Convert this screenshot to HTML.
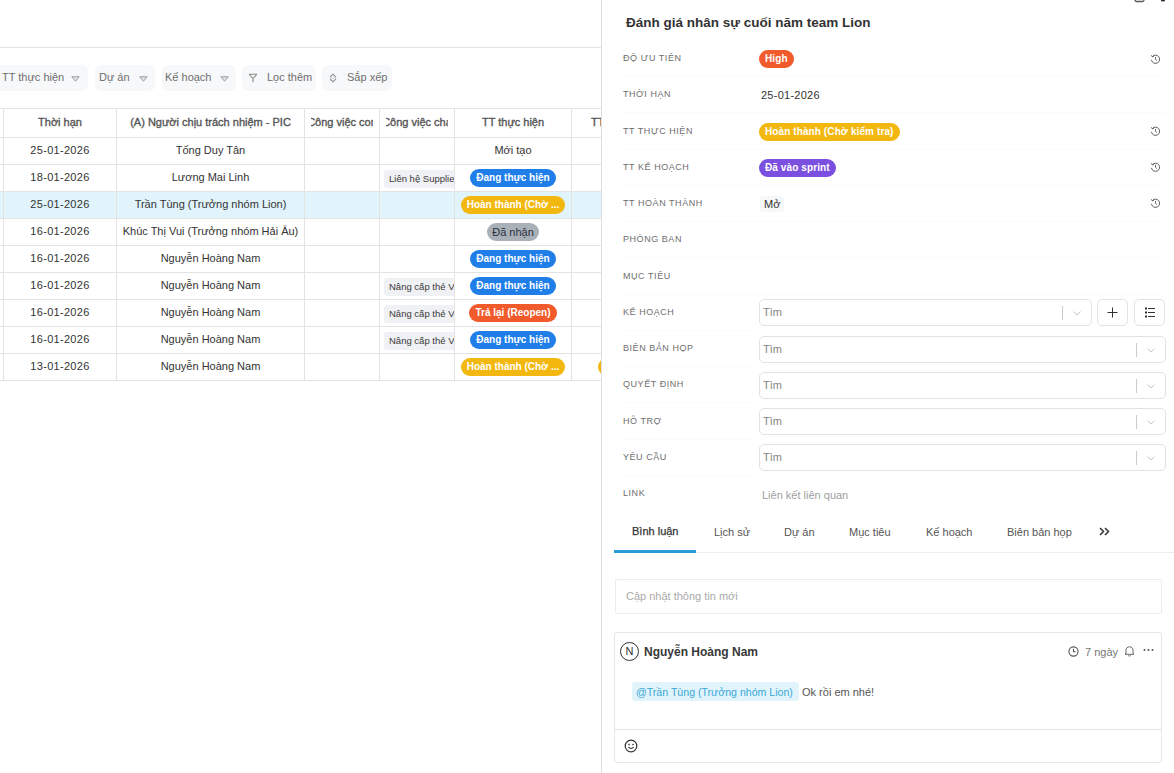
<!DOCTYPE html>
<html><head><meta charset="utf-8">
<style>
*{box-sizing:border-box;margin:0;padding:0}
html,body{width:1174px;height:773px;overflow:hidden;background:#fff;font-family:"Liberation Sans",sans-serif;color:#333}
.abs{position:absolute}
#left{position:absolute;left:0;top:0;width:601px;height:773px;overflow:hidden;background:#fff}
.topline{position:absolute;left:0;top:47px;width:601px;height:1px;background:#e3e3e3}
.chip{position:absolute;top:65px;height:26px;background:#f7f8fa;border-radius:6px;font-size:11px;color:#6e6e6e;line-height:24px;white-space:nowrap}
.chip span{position:absolute;top:0}
.tri{position:absolute;top:11px;width:9px;height:6px}
.hl{position:absolute;left:0;width:601px;height:1px;background:#e3e3e3}
.vl{position:absolute;width:1px;background:#e3e3e3}
.cell{position:absolute;font-size:11px;text-align:center;white-space:nowrap;overflow:hidden;display:flex;align-items:center;justify-content:center;color:#333}
.cellc{position:absolute;white-space:nowrap;overflow:hidden;display:flex;align-items:center;justify-content:flex-start;padding-left:4px}
.th{font-weight:normal;color:#555;-webkit-text-stroke:0.35px #555;margin-top:-1px}
.th .in{position:absolute;left:6px;right:6px;top:0;bottom:0;overflow:hidden;display:flex;align-items:center;justify-content:center;white-space:nowrap}
.b{display:inline-block;height:18px;line-height:18px;border-radius:9px;color:#fff;font-weight:bold;padding:0 6px;font-size:10px}
.blue{background:#1f7ee8}
.yel{background:#f2b80f}
.gray{background:#a9b0b8;color:#2a333d;font-weight:normal;font-size:11px;padding:0 5px}
.red{background:#f15a2b}
.purple{background:#7b4fe0}
.tag{display:block;background:#f0f1f4;border-radius:3px;height:18px;line-height:18px;font-size:9.5px;padding:0 5px;color:#3a3a3a;white-space:nowrap}
#panel{position:absolute;left:601px;top:0;width:573px;height:773px;background:transparent;overflow:hidden}
.title{position:absolute;left:25px;top:15px;font-size:13.5px;font-weight:bold;color:#333;white-space:nowrap}
.lbl{position:absolute;left:22px;font-size:9px;color:#6e6e6e;letter-spacing:0.55px;white-space:nowrap}
.sep{position:absolute;left:21px;right:8px;height:1px;background:#fbfbfb}
.pb{position:absolute;left:158px;height:18px;line-height:18px;border-radius:9px;color:#fff;font-weight:bold;font-size:10px;padding:0 6px;white-space:nowrap}
.hist{position:absolute;left:549px;width:10px;height:10px}
.inp{position:absolute;left:158px;width:407px;height:27px;border:1px solid #e2e2e2;border-radius:5px;background:#fff}
.inp .ph{position:absolute;left:3px;top:6px;font-size:11px;color:#858585}
.inp .vs{position:absolute;right:28px;top:6px;width:1px;height:14px;background:#ccc}
.inp .chev{position:absolute;right:10px;top:9px;width:8px;height:8px}
.tab{position:absolute;top:526px;font-size:11px;color:#555;white-space:nowrap}
.pb{letter-spacing:0.1px}
.btn{width:31px;height:27px;border:1px solid #e2e2e2;border-radius:5px;background:#fff}

.tx{position:relative;top:-1px}
.cellc .tag{position:relative;top:1px}

</style></head><body>
<div id="left">
<div class="topline"></div>
<div class="chip" style="left:-10px;width:98px"><span style="left:12px">TT thực hiện</span><svg class="tri" style="left:81px" viewBox="0 0 9 6"><path d="M0.8 0.8H8.2L4.5 5.2Z" fill="#e4e6ea" stroke="#9a9a9a" stroke-width="1" stroke-linejoin="round"/></svg></div>
<div class="chip" style="left:95px;width:60px"><span style="left:4px">Dự án</span><svg class="tri" style="left:44px" viewBox="0 0 9 6"><path d="M0.8 0.8H8.2L4.5 5.2Z" fill="#e4e6ea" stroke="#9a9a9a" stroke-width="1" stroke-linejoin="round"/></svg></div>
<div class="chip" style="left:162px;width:74px"><span style="left:3px">Kế hoạch</span><svg class="tri" style="left:58px" viewBox="0 0 9 6"><path d="M0.8 0.8H8.2L4.5 5.2Z" fill="#e4e6ea" stroke="#9a9a9a" stroke-width="1" stroke-linejoin="round"/></svg></div>
<div class="chip" style="left:242px;width:74px"><svg class="abs" style="left:6px;top:8px" width="10" height="10" viewBox="0 0 10 10"><path d="M1 1.2H9M1.3 1.5L5 5.5L8.7 1.5M5 5.5V9.2" fill="none" stroke="#888" stroke-width="1.1"/></svg><span style="left:25px">Lọc thêm</span></div>
<div class="chip" style="left:322px;width:70px"><svg class="abs" style="left:7px;top:8px" width="8" height="10" viewBox="0 0 8 10"><path d="M1 4.2L4 1.2L7 4.2M1 5.8L4 8.8L7 5.8" fill="none" stroke="#888" stroke-width="1.1"/><path d="M1.5 5H6.5" stroke="#bbb" stroke-width="0.8"/></svg><span style="left:25px">Sắp xếp</span></div>
<div class="abs" style="left:0;top:191px;width:601px;height:27px;background:#e1f3fb"></div>
<div class="hl" style="top:108px"></div>
<div class="hl" style="top:137px"></div>
<div class="hl" style="top:164px"></div>
<div class="hl" style="top:191px"></div>
<div class="hl" style="top:218px"></div>
<div class="hl" style="top:245px"></div>
<div class="hl" style="top:272px"></div>
<div class="hl" style="top:299px"></div>
<div class="hl" style="top:326px"></div>
<div class="hl" style="top:353px"></div>
<div class="hl" style="top:380px"></div>
<div class="vl" style="left:3px;top:108px;height:273px"></div>
<div class="vl" style="left:116px;top:108px;height:273px"></div>
<div class="vl" style="left:304px;top:108px;height:273px"></div>
<div class="vl" style="left:379px;top:108px;height:273px"></div>
<div class="vl" style="left:454px;top:108px;height:273px"></div>
<div class="vl" style="left:571px;top:108px;height:273px"></div>
<div class="abs th" style="left:591px;top:109px;height:28px;display:flex;align-items:center;font-size:11px;white-space:nowrap">TT kế hoạch</div>
<div class="cell th" style="left:4px;top:109px;width:112px;height:28px"><div class="in">Thời hạn</div></div>
<div class="cell th" style="left:117px;top:109px;width:187px;height:28px"><div class="in">(A) Người chịu trách nhiệm - PIC</div></div>
<div class="cell th" style="left:305px;top:109px;width:74px;height:28px"><div class="in">Công việc con</div></div>
<div class="cell th" style="left:380px;top:109px;width:74px;height:28px"><div class="in">Công việc cha</div></div>
<div class="cell th" style="left:455px;top:109px;width:116px;height:28px"><div class="in">TT thực hiện</div></div>
<div class="cell" style="left:4px;top:138px;width:112px;height:26px"><span class="tx" style="letter-spacing:0.3px">25-01-2026</span></div>
<div class="cell" style="left:117px;top:138px;width:187px;height:26px"><span class="tx">Tống Duy Tân</span></div>
<div class="cell" style="left:455px;top:138px;width:116px;height:26px"><span class="tx">Mới tạo</span></div>
<div class="cell" style="left:4px;top:165px;width:112px;height:26px"><span class="tx" style="letter-spacing:0.3px">18-01-2026</span></div>
<div class="cell" style="left:117px;top:165px;width:187px;height:26px"><span class="tx">Lương Mai Linh</span></div>
<div class="cellc" style="left:380px;top:165px;width:74px;height:26px"><span class="tag">Liên hệ Supplier</span></div>
<div class="cell" style="left:455px;top:165px;width:116px;height:26px"><span class="b blue">Đang thực hiện</span></div>
<div class="cell" style="left:4px;top:192px;width:112px;height:26px"><span class="tx" style="letter-spacing:0.3px">25-01-2026</span></div>
<div class="cell" style="left:117px;top:192px;width:187px;height:26px"><span class="tx">Trần Tùng (Trưởng nhóm Lion)</span></div>
<div class="cell" style="left:455px;top:192px;width:116px;height:26px"><span class="b yel">Hoàn thành (Chờ ...</span></div>
<div class="cell" style="left:4px;top:219px;width:112px;height:26px"><span class="tx" style="letter-spacing:0.3px">16-01-2026</span></div>
<div class="cell" style="left:117px;top:219px;width:187px;height:26px"><span class="tx">Khúc Thị Vui (Trưởng nhóm Hải Âu)</span></div>
<div class="cell" style="left:455px;top:219px;width:116px;height:26px"><span class="b gray">Đã nhận</span></div>
<div class="cell" style="left:4px;top:246px;width:112px;height:26px"><span class="tx" style="letter-spacing:0.3px">16-01-2026</span></div>
<div class="cell" style="left:117px;top:246px;width:187px;height:26px"><span class="tx">Nguyễn Hoàng Nam</span></div>
<div class="cell" style="left:455px;top:246px;width:116px;height:26px"><span class="b blue">Đang thực hiện</span></div>
<div class="cell" style="left:4px;top:273px;width:112px;height:26px"><span class="tx" style="letter-spacing:0.3px">16-01-2026</span></div>
<div class="cell" style="left:117px;top:273px;width:187px;height:26px"><span class="tx">Nguyễn Hoàng Nam</span></div>
<div class="cellc" style="left:380px;top:273px;width:74px;height:26px"><span class="tag">Nâng cấp thẻ VIP</span></div>
<div class="cell" style="left:455px;top:273px;width:116px;height:26px"><span class="b blue">Đang thực hiện</span></div>
<div class="cell" style="left:4px;top:300px;width:112px;height:26px"><span class="tx" style="letter-spacing:0.3px">16-01-2026</span></div>
<div class="cell" style="left:117px;top:300px;width:187px;height:26px"><span class="tx">Nguyễn Hoàng Nam</span></div>
<div class="cellc" style="left:380px;top:300px;width:74px;height:26px"><span class="tag">Nâng cấp thẻ VIP</span></div>
<div class="cell" style="left:455px;top:300px;width:116px;height:26px"><span class="b red">Trả lại (Reopen)</span></div>
<div class="cell" style="left:4px;top:327px;width:112px;height:26px"><span class="tx" style="letter-spacing:0.3px">16-01-2026</span></div>
<div class="cell" style="left:117px;top:327px;width:187px;height:26px"><span class="tx">Nguyễn Hoàng Nam</span></div>
<div class="cellc" style="left:380px;top:327px;width:74px;height:26px"><span class="tag">Nâng cấp thẻ VIP</span></div>
<div class="cell" style="left:455px;top:327px;width:116px;height:26px"><span class="b blue">Đang thực hiện</span></div>
<div class="cell" style="left:4px;top:354px;width:112px;height:26px"><span class="tx" style="letter-spacing:0.3px">13-01-2026</span></div>
<div class="cell" style="left:117px;top:354px;width:187px;height:26px"><span class="tx">Nguyễn Hoàng Nam</span></div>
<div class="cell" style="left:455px;top:354px;width:116px;height:26px"><span class="b yel">Hoàn thành (Chờ ...</span></div>
<div class="abs b yel" style="left:598px;top:358px;width:40px"></div>
</div>
<div class="abs" style="left:601px;top:0;width:1px;height:773px;background:#dedede"></div>
<div id="panel">
  <div class="title">Đánh giá nhân sự cuối năm team Lion</div>
  <svg class="abs" style="left:533px;top:-6px" width="12" height="9" viewBox="0 0 12 9"><rect x="1" y="0" width="9" height="7.5" rx="1.5" fill="none" stroke="#555" stroke-width="1.3"/></svg>
  <svg class="abs" style="left:558px;top:-4px" width="8" height="6" viewBox="0 0 8 6"><ellipse cx="4" cy="3" rx="2.3" ry="2.5" fill="#222"/></svg>

  <div class="sep" style="top:76px"></div>
  <div class="sep" style="top:112px"></div>
  <div class="sep" style="top:149px"></div>
  <div class="sep" style="top:185px"></div>
  <div class="sep" style="top:221px"></div>
  <div class="sep" style="top:257px"></div>
  <div class="sep" style="top:294px"></div>
  <div class="sep" style="top:330px;right:auto;width:136px"></div>
  <div class="sep" style="top:366px;right:auto;width:136px"></div>
  <div class="sep" style="top:402px;right:auto;width:136px"></div>
  <div class="sep" style="top:439px;right:auto;width:136px"></div>
  <div class="sep" style="top:475px;right:auto;width:136px"></div>

  <div class="lbl" style="top:53px">ĐỘ ƯU TIÊN</div>
  <div class="lbl" style="top:89px">THỜI HẠN</div>
  <div class="lbl" style="top:126px">TT THỰC HIỆN</div>
  <div class="lbl" style="top:162px">TT KẾ HOẠCH</div>
  <div class="lbl" style="top:198px">TT HOÀN THÀNH</div>
  <div class="lbl" style="top:234px">PHÒNG BAN</div>
  <div class="lbl" style="top:271px">MỤC TIÊU</div>
  <div class="lbl" style="top:307px">KẾ HOẠCH</div>
  <div class="lbl" style="top:343px">BIÊN BẢN HỌP</div>
  <div class="lbl" style="top:379px">QUYẾT ĐỊNH</div>
  <div class="lbl" style="top:416px">HỖ TRỢ</div>
  <div class="lbl" style="top:452px">YÊU CẦU</div>
  <div class="lbl" style="top:488px">LINK</div>

  <div class="pb red" style="top:50px">High</div>
  <div class="abs" style="left:160px;top:89px;font-size:11px;color:#333;letter-spacing:0.25px">25-01-2026</div>
  <div class="pb yel" style="top:123px">Hoàn thành (Chờ kiểm tra)</div>
  <div class="pb purple" style="top:159px">Đã vào sprint</div>
  <div class="abs" style="left:159px;top:196px;height:16px;line-height:16px;padding:0 4px;background:#f5f7f9;border-radius:4px;font-size:11px;color:#333">Mở</div>

  <svg class="abs" style="left:549px;top:54px" width="11" height="11" viewBox="0 0 11 11"><path d="M2.3 2.7A4.1 4.1 0 1 1 1.45 5.9" fill="none" stroke="#555" stroke-width="0.95"/><path d="M1.3 1.3L2.3 2.9L3.9 2.3" fill="none" stroke="#555" stroke-width="0.9"/><path d="M5.5 2.9V5.3L6.9 6.5" fill="none" stroke="#555" stroke-width="0.9"/></svg>
<svg class="abs" style="left:549px;top:126px" width="11" height="11" viewBox="0 0 11 11"><path d="M2.3 2.7A4.1 4.1 0 1 1 1.45 5.9" fill="none" stroke="#555" stroke-width="0.95"/><path d="M1.3 1.3L2.3 2.9L3.9 2.3" fill="none" stroke="#555" stroke-width="0.9"/><path d="M5.5 2.9V5.3L6.9 6.5" fill="none" stroke="#555" stroke-width="0.9"/></svg>
<svg class="abs" style="left:549px;top:162px" width="11" height="11" viewBox="0 0 11 11"><path d="M2.3 2.7A4.1 4.1 0 1 1 1.45 5.9" fill="none" stroke="#555" stroke-width="0.95"/><path d="M1.3 1.3L2.3 2.9L3.9 2.3" fill="none" stroke="#555" stroke-width="0.9"/><path d="M5.5 2.9V5.3L6.9 6.5" fill="none" stroke="#555" stroke-width="0.9"/></svg>
<svg class="abs" style="left:549px;top:198px" width="11" height="11" viewBox="0 0 11 11"><path d="M2.3 2.7A4.1 4.1 0 1 1 1.45 5.9" fill="none" stroke="#555" stroke-width="0.95"/><path d="M1.3 1.3L2.3 2.9L3.9 2.3" fill="none" stroke="#555" stroke-width="0.9"/><path d="M5.5 2.9V5.3L6.9 6.5" fill="none" stroke="#555" stroke-width="0.9"/></svg>


  <div class="inp" style="top:299px;width:333px"><span class="ph">Tìm</span><i class="vs"></i><svg class="chev" viewBox="0 0 8 8"><path d="M0.5 2.5L4 6L7.5 2.5" fill="none" stroke="#c4c4c4" stroke-width="1"/></svg></div>
  <div class="abs btn" style="left:496px;top:299px"><svg class="abs" style="left:9px;top:7px" width="12" height="12" viewBox="0 0 12 12"><path d="M5.5 0.5V10.5M0.5 5.5H10.5" stroke="#333" stroke-width="1"/></svg></div>
  <div class="abs btn" style="left:533px;top:299px"><svg class="abs" style="left:10px;top:7px" width="11" height="11" viewBox="0 0 11 11"><path d="M3 1.5H10M3 5.5H10M3 9.5H10" stroke="#333" stroke-width="1"/><rect x="0" y="0.5" width="2" height="2" fill="#333"/><rect x="0" y="4.5" width="2" height="2" fill="#333"/><rect x="0" y="8.5" width="2" height="2" fill="#333"/></svg></div>
  <div class="inp" style="top:336px"><span class="ph">Tìm</span><i class="vs"></i><svg class="chev" viewBox="0 0 8 8"><path d="M0.5 2.5L4 6L7.5 2.5" fill="none" stroke="#c4c4c4" stroke-width="1"/></svg></div>
  <div class="inp" style="top:372px"><span class="ph">Tìm</span><i class="vs"></i><svg class="chev" viewBox="0 0 8 8"><path d="M0.5 2.5L4 6L7.5 2.5" fill="none" stroke="#c4c4c4" stroke-width="1"/></svg></div>
  <div class="inp" style="top:408px"><span class="ph">Tìm</span><i class="vs"></i><svg class="chev" viewBox="0 0 8 8"><path d="M0.5 2.5L4 6L7.5 2.5" fill="none" stroke="#c4c4c4" stroke-width="1"/></svg></div>
  <div class="inp" style="top:444px"><span class="ph">Tìm</span><i class="vs"></i><svg class="chev" viewBox="0 0 8 8"><path d="M0.5 2.5L4 6L7.5 2.5" fill="none" stroke="#c4c4c4" stroke-width="1"/></svg></div>
  <div class="abs" style="left:161px;top:489px;font-size:11px;color:#a0a0a0">Liên kết liên quan</div>

  <div class="abs" style="left:13px;top:552px;width:560px;height:1px;background:#ececec"></div>
  <div class="abs" style="left:13px;top:550px;width:82px;height:3px;background:#2a9bd6"></div>
  <div class="tab" style="left:31px;top:525px;color:#333;-webkit-text-stroke:0.25px #333">Bình luận</div>
  <div class="tab" style="left:113px">Lịch sử</div>
  <div class="tab" style="left:183px">Dự án</div>
  <div class="tab" style="left:248px">Mục tiêu</div>
  <div class="tab" style="left:325px">Kế hoạch</div>
  <div class="tab" style="left:406px">Biên bản họp</div>
  <svg class="abs" style="left:498px;top:527px" width="11" height="9" viewBox="0 0 11 9"><path d="M1 1L4.5 4.5L1 8M6 1L9.5 4.5L6 8" fill="none" stroke="#333" stroke-width="1.5"/></svg>

  <div class="abs" style="left:14px;top:579px;width:547px;height:35px;border:1px solid #ececec;border-radius:2px"></div>
  <div class="abs" style="left:25px;top:590px;font-size:11px;color:#aaa">Cập nhật thông tin mới</div>

  <div class="abs" style="left:13px;top:632px;width:548px;height:131px;border:1px solid #e6e6e6;border-radius:3px"></div>
  <div class="abs" style="left:14px;top:729px;width:546px;height:1px;background:#e3e3e3"></div>
  <div class="abs" style="left:19px;top:642px;width:19px;height:19px;border:1.2px solid #333;border-radius:50%;font-size:11px;line-height:17px;text-align:center;color:#333">N</div>
  <div class="abs" style="left:43px;top:645px;font-size:12px;font-weight:bold;color:#383838">Nguyễn Hoàng Nam</div>
  <svg class="abs" style="left:467px;top:646px" width="11" height="11" viewBox="0 0 11 11"><circle cx="5.5" cy="5.5" r="4.6" fill="none" stroke="#555" stroke-width="1.1"/><path d="M5.5 2.8V5.7H7.7" fill="none" stroke="#555" stroke-width="1.1"/></svg>
  <div class="abs" style="left:484px;top:646px;font-size:11px;color:#777">7 ngày</div>
  <svg class="abs" style="left:523px;top:645px" width="11" height="12" viewBox="0 0 11 12"><path d="M2 8.5V5.2C2 3.2 3.5 1.8 5.5 1.8S9 3.2 9 5.2V8.5L10 9.3H1Z" fill="none" stroke="#555" stroke-width="0.9"/><path d="M4.3 10.5Q5.5 11.8 6.7 10.5" fill="none" stroke="#555" stroke-width="0.9"/></svg>
  <svg class="abs" style="left:542px;top:648px" width="11" height="4" viewBox="0 0 11 4"><circle cx="1.5" cy="2" r="1" fill="#555"/><circle cx="5.5" cy="2" r="1" fill="#555"/><circle cx="9.5" cy="2" r="1" fill="#555"/></svg>
  <div class="abs" style="left:31px;top:682px;height:19px;width:167px;background:#e1f4fb;border-radius:3px"></div>
  <div class="abs" style="left:35px;top:686px;font-size:10.6px;color:#3aa8d8">@Trần Tùng (Trưởng nhóm Lion)</div>
  <div class="abs" style="left:201px;top:686px;font-size:11px;color:#555">Ok rồi em nhé!</div>
  <svg class="abs" style="left:23px;top:739px" width="14" height="14" viewBox="0 0 14 14"><circle cx="7" cy="7" r="5.8" fill="none" stroke="#333" stroke-width="1.2"/><circle cx="5" cy="5.6" r="0.8" fill="#333"/><circle cx="9" cy="5.6" r="0.8" fill="#333"/><path d="M4.3 8.2Q7 10.8 9.7 8.2" fill="none" stroke="#333" stroke-width="1.1"/></svg>
</div>
</body></html>
